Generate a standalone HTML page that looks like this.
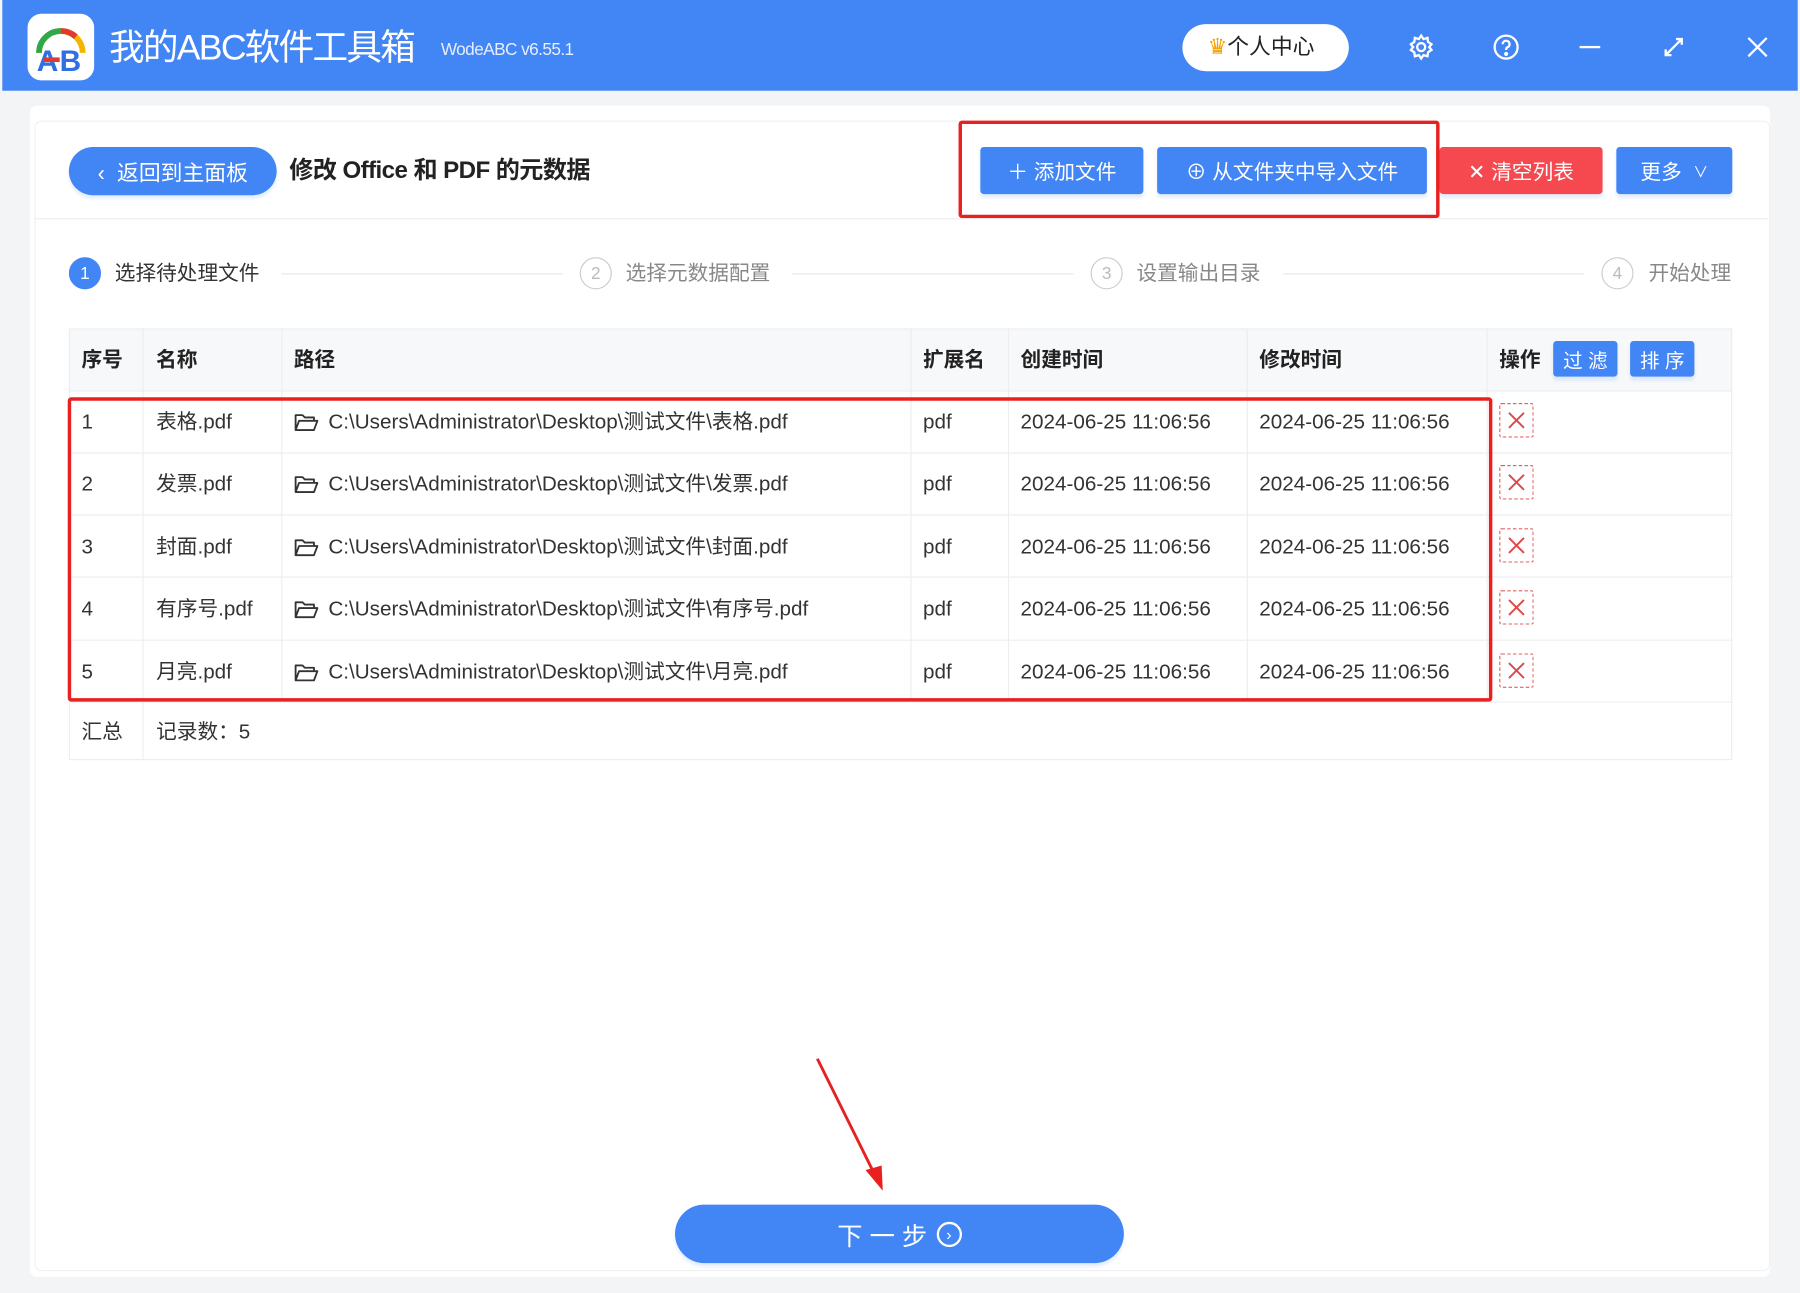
<!DOCTYPE html>
<html><head><meta charset="utf-8">
<style>
html,body{margin:0;padding:0;width:1800px;height:1293px;overflow:hidden;background:#dfe3ea}
#s{position:absolute;left:0;top:0;width:1568px;height:1126px;transform:scale(1.14796,1.1483);transform-origin:0 0;font-family:"Liberation Sans","Noto Sans CJK SC",sans-serif;color:#333}
.a{position:absolute}
.hdr{left:2px;top:0;width:1564px;height:79px;background:#4285f4}
.btn{position:absolute;background:#4285f4;color:#fff;font-size:18px;display:flex;align-items:center;justify-content:center;border-radius:3px;box-shadow:0 3px 3px rgba(66,133,244,.15)}
.t{position:absolute;font-size:18px;white-space:nowrap;line-height:24px}
.hl{position:absolute;border-top:1px solid #ebedf0;height:0}
.vl{position:absolute;border-left:1px solid #ebedf0;width:0}
.circ{position:absolute;width:28px;height:28px;border-radius:50%;border:1px solid #ccc;color:#bbb;font-size:15px;display:flex;align-items:center;justify-content:center;box-sizing:border-box}
.step{position:absolute;font-size:18px;color:#888;top:226px;line-height:24px}
.sl{position:absolute;top:238px;border-top:1px solid #e4e6ea}
.del{position:absolute;left:1306px;width:30px;height:30px;border:1px dashed #e06060;box-sizing:border-box;border-radius:2px}
.red{position:absolute;border:3px solid #e8201f;border-radius:3px;box-sizing:border-box}
.fd{display:inline-block;vertical-align:-3px;margin-right:8px}
</style></head><body><div id="s">
<div class="a" style="left:0;top:0;width:1568px;height:1126px;background:#f3f4f6"></div>
<div class="a hdr"></div>
<div class="a" style="left:24px;top:12px;width:58px;height:58px;background:#fff;border-radius:12px"></div>
<svg class="a" style="left:24px;top:12px" width="58" height="58" viewBox="0 0 58 58">
<path d="M10 34 A19 19 0 0 1 48 34" fill="none" stroke="#f5b400" stroke-width="5"/>
<path d="M10 34 A19 19 0 0 1 29 15" fill="none" stroke="#2ea84b" stroke-width="5"/>
<path d="M29 15 A19 19 0 0 1 42 20" fill="none" stroke="#e03a2f" stroke-width="5"/>
<text x="8" y="50" font-family="Liberation Sans" font-weight="bold" font-size="26" fill="#2f6fe0">A</text>
<text x="28" y="50" font-family="Liberation Sans" font-weight="bold" font-size="26" fill="#2f6fe0">B</text>
<rect x="14" y="38" width="14" height="4" fill="#e03a2f"/>
</svg>
<div class="t" style="left:95px;top:22px;font-size:31px;line-height:40px;color:#fff;letter-spacing:-1.5px">我的ABC软件工具箱</div>
<div class="t" style="left:384px;top:32px;font-size:15px;color:#e6efff;letter-spacing:-0.5px">WodeABC v6.55.1</div>
<div class="a" style="left:1030px;top:21px;width:145px;height:41px;background:#fff;border-radius:21px"></div>
<div class="t" style="left:1052px;top:30px;font-size:19px;color:#222"><span style="color:#f4a300">♛</span>个人中心</div>
<svg class="a" style="left:1226px;top:29px" width="24" height="24" viewBox="0 0 24 24" fill="none" stroke="#fff" stroke-width="2"><circle cx="12" cy="12" r="3.5"/><path d="M12 2l2 3 3.5-1 .5 3.5 3 2-2 2.5 2 2.5-3 2-.5 3.5-3.5-1-2 3-2-3-3.5 1-.5-3.5-3-2 2-2.5-2-2.5 3-2 .5-3.5 3.5 1z"/></svg>
<svg class="a" style="left:1300px;top:29px" width="24" height="24" viewBox="0 0 24 24" fill="none" stroke="#fff" stroke-width="2"><circle cx="12" cy="12" r="10"/><path d="M9 9.5a3 3 0 1 1 4 2.8c-1 .4-1 1.2-1 2.2"/><circle cx="12" cy="18" r=".8" fill="#fff"/></svg>
<div class="a" style="left:1376px;top:40px;width:18px;height:2px;background:#fff"></div>
<svg class="a" style="left:1448px;top:31px" width="20" height="20" viewBox="0 0 20 20" fill="none" stroke="#fff" stroke-width="2"><path d="M3 17L17 3M12 3h5v5M3 12v5h5"/></svg>
<svg class="a" style="left:1522px;top:32px" width="18" height="18" viewBox="0 0 18 18" stroke="#fff" stroke-width="2"><path d="M1 1L17 17M17 1L1 17"/></svg>

<div class="a" style="left:26px;top:92px;width:1516px;height:1020px;background:#fff;border-radius:6px"></div>
<div class="a" style="left:30px;top:105px;width:1510px;height:1000px;border:1px solid #eef0f3;border-radius:6px"></div>
<div class="btn" style="left:60px;top:128px;width:181px;height:42px;border-radius:21px;font-size:19px">‹&nbsp;&nbsp;返回到主面板</div>
<div class="t" style="left:252px;top:137px;font-size:21px;font-weight:bold;color:#222;letter-spacing:-0.5px">修改 Office 和 PDF 的元数据</div>
<div class="btn" style="left:854px;top:128px;width:142px;height:41px">＋ 添加文件</div>
<div class="btn" style="left:1008px;top:128px;width:235px;height:41px">⊕ 从文件夹中导入文件</div>
<div class="btn" style="left:1254px;top:128px;width:142px;height:41px;background:#f5494f">✕ 清空列表</div>
<div class="btn" style="left:1408px;top:128px;width:101px;height:41px">更多 &nbsp;<span style="font-size:13px">∨</span></div>
<div class="red" style="left:835px;top:105px;width:419px;height:85px"></div>
<div class="hl" style="left:30px;top:190px;width:1510px"></div>

<div class="circ" style="left:60px;top:224px;background:#4285f4;border-color:#4285f4;color:#fff">1</div>
<div class="step" style="left:100px;color:#333">选择待处理文件</div>
<div class="sl" style="left:245px;width:245px"></div>
<div class="circ" style="left:505px;top:224px">2</div>
<div class="step" style="left:545px">选择元数据配置</div>
<div class="sl" style="left:690px;width:245px"></div>
<div class="circ" style="left:950px;top:224px">3</div>
<div class="step" style="left:990px">设置输出目录</div>
<div class="sl" style="left:1118px;width:262px"></div>
<div class="circ" style="left:1395px;top:224px">4</div>
<div class="step" style="left:1436px">开始处理</div>

<div class="a" style="left:60px;top:286px;width:1449px;height:54px;background:#f7f8fa"></div>
<div class="a" style="left:60px;top:286px;width:1449px;height:376px;border:1px solid #ebedf0;box-sizing:border-box"></div>
<div class="hl" style="left:60px;top:340px;width:1449px"></div>
<div class="hl" style="left:60px;top:394px;width:1449px"></div>
<div class="hl" style="left:60px;top:448px;width:1449px"></div>
<div class="hl" style="left:60px;top:502px;width:1449px"></div>
<div class="hl" style="left:60px;top:557px;width:1449px"></div>
<div class="hl" style="left:60px;top:611px;width:1449px"></div>
<div class="vl" style="left:124px;top:286px;height:376px"></div>
<div class="vl" style="left:245px;top:286px;height:325px"></div>
<div class="vl" style="left:793px;top:286px;height:325px"></div>
<div class="vl" style="left:878px;top:286px;height:325px"></div>
<div class="vl" style="left:1086px;top:286px;height:325px"></div>
<div class="vl" style="left:1295px;top:286px;height:325px"></div>

<div class="t" style="left:71px;top:301px;font-weight:bold;color:#222">序号</div>
<div class="t" style="left:136px;top:301px;font-weight:bold;color:#222">名称</div>
<div class="t" style="left:256px;top:301px;font-weight:bold;color:#222">路径</div>
<div class="t" style="left:804px;top:301px;font-weight:bold;color:#222">扩展名</div>
<div class="t" style="left:889px;top:301px;font-weight:bold;color:#222">创建时间</div>
<div class="t" style="left:1097px;top:301px;font-weight:bold;color:#222">修改时间</div>
<div class="t" style="left:1306px;top:301px;font-weight:bold;color:#222">操作</div>
<div class="btn" style="left:1353px;top:297px;width:56px;height:31px;font-size:17px">过 滤</div>
<div class="btn" style="left:1420px;top:297px;width:56px;height:31px;font-size:17px">排 序</div>

<svg width="0" height="0" style="position:absolute"><defs><symbol id="fo" viewBox="0 0 22 16"><path d="M1.5 14.5V1.5h6l2 2h8v3M1.5 14.5l3-8h16l-3 8z" fill="none" stroke="#333" stroke-width="1.6" stroke-linejoin="round"/></symbol><symbol id="xx" viewBox="0 0 30 30"><path d="M8 8L22 22M22 8L8 22" stroke="#e04848" stroke-width="1.8"/></symbol></defs></svg>

<div class="t" style="left:71px;top:355px">1</div><div class="t" style="left:136px;top:355px">表格.pdf</div><div class="t" style="left:256px;top:355px"><svg class="fd" width="22" height="16"><use href="#fo"/></svg>C:\Users\Administrator\Desktop\测试文件\表格.pdf</div><div class="t" style="left:804px;top:355px">pdf</div><div class="t" style="left:889px;top:355px">2024-06-25 11:06:56</div><div class="t" style="left:1097px;top:355px">2024-06-25 11:06:56</div><div class="del" style="top:351px"><svg width="28" height="28"><use href="#xx"/></svg></div>
<div class="t" style="left:71px;top:409px">2</div><div class="t" style="left:136px;top:409px">发票.pdf</div><div class="t" style="left:256px;top:409px"><svg class="fd" width="22" height="16"><use href="#fo"/></svg>C:\Users\Administrator\Desktop\测试文件\发票.pdf</div><div class="t" style="left:804px;top:409px">pdf</div><div class="t" style="left:889px;top:409px">2024-06-25 11:06:56</div><div class="t" style="left:1097px;top:409px">2024-06-25 11:06:56</div><div class="del" style="top:405px"><svg width="28" height="28"><use href="#xx"/></svg></div>
<div class="t" style="left:71px;top:464px">3</div><div class="t" style="left:136px;top:464px">封面.pdf</div><div class="t" style="left:256px;top:464px"><svg class="fd" width="22" height="16"><use href="#fo"/></svg>C:\Users\Administrator\Desktop\测试文件\封面.pdf</div><div class="t" style="left:804px;top:464px">pdf</div><div class="t" style="left:889px;top:464px">2024-06-25 11:06:56</div><div class="t" style="left:1097px;top:464px">2024-06-25 11:06:56</div><div class="del" style="top:460px"><svg width="28" height="28"><use href="#xx"/></svg></div>
<div class="t" style="left:71px;top:518px">4</div><div class="t" style="left:136px;top:518px">有序号.pdf</div><div class="t" style="left:256px;top:518px"><svg class="fd" width="22" height="16"><use href="#fo"/></svg>C:\Users\Administrator\Desktop\测试文件\有序号.pdf</div><div class="t" style="left:804px;top:518px">pdf</div><div class="t" style="left:889px;top:518px">2024-06-25 11:06:56</div><div class="t" style="left:1097px;top:518px">2024-06-25 11:06:56</div><div class="del" style="top:514px"><svg width="28" height="28"><use href="#xx"/></svg></div>
<div class="t" style="left:71px;top:573px">5</div><div class="t" style="left:136px;top:573px">月亮.pdf</div><div class="t" style="left:256px;top:573px"><svg class="fd" width="22" height="16"><use href="#fo"/></svg>C:\Users\Administrator\Desktop\测试文件\月亮.pdf</div><div class="t" style="left:804px;top:573px">pdf</div><div class="t" style="left:889px;top:573px">2024-06-25 11:06:56</div><div class="t" style="left:1097px;top:573px">2024-06-25 11:06:56</div><div class="del" style="top:569px"><svg width="28" height="28"><use href="#xx"/></svg></div>
<div class="t" style="left:71px;top:625px">汇总</div><div class="t" style="left:136px;top:625px">记录数：5</div>
<div class="red" style="left:59px;top:346px;width:1241px;height:265px"></div>

<svg class="a" style="left:700px;top:915px" width="80" height="130" viewBox="0 0 80 130"><path d="M12 7L64 112" stroke="#e8201f" stroke-width="2.5"/><path d="M69 122L54 104 68 100z" fill="#e8201f"/></svg>
<div class="btn" style="left:588px;top:1049px;width:391px;height:51px;border-radius:26px;font-size:22px">下 一 步 <span style="display:inline-block;width:18px;height:18px;border:2px solid #fff;border-radius:50%;font-size:14px;line-height:18px;text-align:center;margin-left:8px">›</span></div>
</div></body></html>
